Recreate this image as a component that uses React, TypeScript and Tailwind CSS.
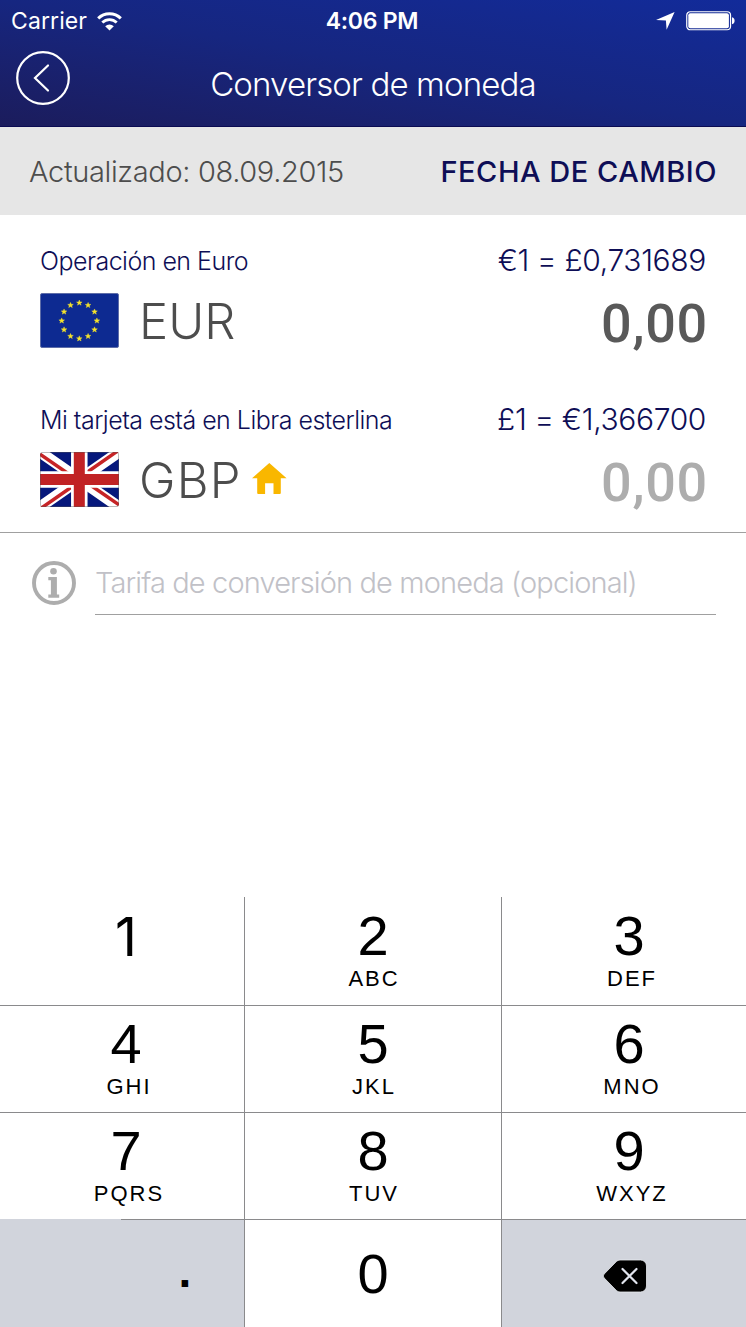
import type { ReactNode } from "react";

const keys = [
  { digit: "1", letters: "" },
  { digit: "2", letters: "ABC" },
  { digit: "3", letters: "DEF" },
  { digit: "4", letters: "GHI" },
  { digit: "5", letters: "JKL" },
  { digit: "6", letters: "MNO" },
  { digit: "7", letters: "PQRS" },
  { digit: "8", letters: "TUV" },
  { digit: "9", letters: "WXYZ" },
];

function StatusBar() {
  return (
    <div className="grid h-10 grid-cols-3 items-center pt-px text-[23px] leading-none text-white">
      <div className="flex items-center pl-[11px] pt-px">
        <span className="tracking-[0.1px]">Carrier</span>
        <svg className="ml-[10px]" width="25" height="19" viewBox="0 0 25 19" fill="none" stroke="#fff">
          <path d="M1.2 6.4a16 16 0 0 1 22.6 0" strokeWidth="3" />
          <path d="M5.3 10.6a10.2 10.2 0 0 1 14.4 0" strokeWidth="2.8" />
          <path d="M12.5 18.6 8.2 14.2a6.1 6.1 0 0 1 8.6 0z" fill="#fff" stroke="none" />
        </svg>
      </div>
      <div className="pr-[2px] pt-px text-center font-semibold tracking-[-0.25px]">4:06 PM</div>
      <div className="flex items-center justify-end pr-[11px]">
        <svg className="mr-[11px]" width="19" height="18" viewBox="0 0 19 18" fill="#fff">
          <path d="M18.6 0 10.6 17.7 9.9 8.4 0 7.9z" />
        </svg>
        <svg width="49" height="20" viewBox="0 0 49 20">
          <rect x="0.75" y="0.75" width="43.8" height="18" rx="3.5" fill="none" stroke="#fff" strokeWidth="1.2" />
          <rect x="2.3" y="2.3" width="40.6" height="15" rx="2" fill="#fff" />
          <path d="M46 6.3c1.8.4 2.6 1.7 2.6 3.5s-.8 3.1-2.6 3.5z" fill="#fff" />
        </svg>
      </div>
    </div>
  );
}

function Header() {
  return (
    <header className="h-[127px] border-b border-[#0b0b52] bg-linear-to-bl from-[#122b9a] via-[#162680] to-[#1b1c5c]">
      <StatusBar />
      <div className="grid grid-cols-[70px_1fr_70px] items-start text-white">
        <button className="ml-[15px] mt-[10px]">
          <svg width="56" height="56" viewBox="0 0 56 56" fill="none" stroke="#fff" strokeWidth="2.2">
            <circle cx="28" cy="28" r="25.8" />
            <path d="M33 15.5 20 28l13 12.5" strokeLinecap="round" />
          </svg>
        </button>
        <h1 className="mt-6 text-center text-[33px] font-light leading-10 tracking-[-0.87px]">Conversor de moneda</h1>
      </div>
    </header>
  );
}

function EuFlag() {
  return (
    <svg width="79" height="55" viewBox="0 0 79 55">
      <rect x="0.5" y="0.5" width="78" height="54" rx="1.5" fill="#0d2a91" stroke="#5e6da8" />
      {Array.from({ length: 12 }, (_, i) => (
        <path
          key={i}
          d="M0-2.8.8-.9 2.8-.8 1.2.5 1.8 2.4 0 1.3-1.8 2.4-1.2.5-2.8-.8-.8-.9z"
          fill="#f5e32c"
          stroke="#f5e32c"
          strokeWidth="0.4"
          transform={`translate(${39.3 + 17.6 * Math.sin((i * Math.PI) / 6)} ${27.7 - 17.9 * Math.cos((i * Math.PI) / 6)})`}
        />
      ))}
    </svg>
  );
}

function UkFlag() {
  return (
    <svg width="79" height="55" viewBox="0 0 79 55">
      <rect width="79" height="55" rx="1.5" fill="#06187c" />
      <path d="M0 0 79 55M79 0 0 55" stroke="#fff" strokeWidth="11" />
      <path d="M0 2.2 28 21.5M79 52.8 51 33.5M77.5-1 46 21M1.5 56 33 34" stroke="#c62426" strokeWidth="3.4" />
      <path d="M39.3 0v55M0 27.5h79" stroke="#fff" strokeWidth="16.5" />
      <path d="M39.3 0v55M0 27.5h79" stroke="#c12224" strokeWidth="11" />
      <rect x="0.5" y="0.5" width="78" height="54" rx="1.5" fill="none" stroke="#555" strokeOpacity="0.4" />
    </svg>
  );
}

function HomeIcon() {
  return (
    <svg className="mb-[2px]" width="35" height="31" viewBox="0 0 35 31" fill="#f9b700">
      <path d="M17.3 0 34.6 15.3h-5.8V30a1 1 0 0 1-1 1h-6.3V20.2h-8.4V31H6.2a1 1 0 0 1-1-1V15.3H0z" />
    </svg>
  );
}

type CurrencyProps = {
  label: string;
  rate: string;
  amount: string;
  amountColor: string;
  children: ReactNode;
};

function CurrencyBlock({ label, rate, amount, amountColor, children }: CurrencyProps) {
  return (
    <div>
      <div className="flex h-10 items-center justify-between font-light leading-none text-[#0e0e56]">
        <span className="pt-[3px] text-[25px] tracking-[-0.52px]">{label}</span>
        <span className="text-[30px] tracking-[-0.35px]">{rate}</span>
      </div>
      <div className="flex h-[81px] items-center justify-between leading-none">
        <div className="flex items-center text-[49px] font-light text-[#4d4d4d]">{children}</div>
        <span className={`-mr-[2px] pt-[7px] font-[Roboto] text-[54px] font-medium tracking-[0.7px] ${amountColor}`}>{amount}</span>
      </div>
    </div>
  );
}

function InfoIcon() {
  return (
    <svg width="44" height="44" viewBox="0 0 44 44" fill="#adadad">
      <circle cx="22" cy="22" r="20" fill="none" stroke="#adadad" strokeWidth="3.9" />
      <circle cx="21.5" cy="10.3" r="3.3" />
      <path d="M16.3 16h8.6v17.4h2.3v3.3H16.3v-3.3h2.6V19.3h-2.6z" />
    </svg>
  );
}

function Keypad() {
  return (
    <div className="grid h-[430px] grid-cols-[245px_257px_244px] grid-rows-[109px_107px_107px_107px] font-['Liberation_Sans'] text-black">
      {keys.map(({ digit, letters }, i) => (
        <div
          key={digit}
          className={`flex flex-col items-center border-[#8a8a8c] ${i < 3 ? "pt-[11px]" : "pt-[10px]"} ${i % 3 < 2 ? "border-r" : ""} ${i % 3 === 0 ? "pl-2" : ""} ${i % 3 === 2 ? "pl-[10px]" : ""} ${i === 6 ? "" : "border-b"}`}
        >
          <span className={i === 0 ? "pt-px font-[Inter] text-[54px] leading-[56px]" : "text-[56px] leading-[56px]"}>{digit}</span>
          <span className={`mt-[3px] text-[22px] leading-6 tracking-[2px] ${i % 3 === 1 ? "pl-[2px]" : "pl-[6px]"}`}>{letters}</span>
        </div>
      ))}
      <div className="flex flex-col items-center border-r border-[#8a8a8c] bg-[#d1d4dc]">
        <span className="pl-[126px] pt-[28px] text-[46px] font-bold leading-[46px]">.</span>
      </div>
      <div className="flex items-center justify-center border-r border-[#8a8a8c]">
        <span className="text-[56px] leading-none">0</span>
      </div>
      <div className="flex items-center justify-center bg-[#d1d4dc] pl-[2px] pt-[5px]">
        <svg width="46" height="34" viewBox="0 0 46 34">
          <path
            d="M18 1h20.5a6 6 0 0 1 6 6v20a6 6 0 0 1-6 6H18a5 5 0 0 1-3.6-1.5L2.2 19a2.8 2.8 0 0 1 0-4L14.4 2.5A5 5 0 0 1 18 1z"
            stroke="#e9ebef"
            strokeWidth="0.8"
          />
          <path d="m20.5 10 14 14M34.5 10l-14 14" stroke="#e2e5ee" strokeWidth="2.2" strokeLinecap="round" />
        </svg>
      </div>
    </div>
  );
}

export default function App() {
  return (
    <div className="flex h-[1327px] w-[746px] flex-col overflow-hidden bg-white font-[Inter,sans-serif]">
      <Header />

      <div className="flex h-[88px] items-center justify-between bg-[#e6e6e6] pl-[29px] pr-[29px] pt-px text-[29px] leading-none">
        <span className="font-light tracking-[-0.35px] text-[#4d4d4d]">Actualizado: 08.09.2015</span>
        <span className="font-medium tracking-[0.52px] text-[#0e0e56]">FECHA DE CAMBIO</span>
      </div>

      <section className="flex h-[318px] flex-col gap-[38px] border-b border-[#a0a0a0] px-10 pt-[25px]">
        <CurrencyBlock label="Operación en Euro" rate="€1 = £0,731689" amount="0,00" amountColor="text-[#595959]">
          <EuFlag />
          <span className="ml-5 pt-[2px]">EUR</span>
        </CurrencyBlock>
        <CurrencyBlock label="Mi tarjeta está en Libra esterlina" rate="£1 = €1,366700" amount="0,00" amountColor="text-[#adadad]">
          <UkFlag />
          <span className="ml-5 mr-[10px] pt-[2px] tracking-[1.2px]">GBP</span>
          <HomeIcon />
        </CurrencyBlock>
      </section>

      {/* Tarifa opcional */}
      <div className="flex pl-8 pr-[30px] pt-7">
        <InfoIcon />
        <div className="ml-[19px] h-[54px] flex-1 border-b border-[#a0a0a0] text-[29px] font-light leading-[43px] tracking-[-0.87px] text-[#c1c1c7]">
          Tarifa de conversión de moneda (opcional)
        </div>
      </div>

      <div className="flex-1" />

      {/* Teclado */}
      <div className="relative">
        <Keypad />
        <div className="absolute left-0 top-[322px] h-px w-[121px] bg-[#d1d4dc]" />
        <div className="absolute left-[121px] top-[322px] h-px w-[124px] bg-[#8a8a8c]" />
      </div>
    </div>
  );
}
